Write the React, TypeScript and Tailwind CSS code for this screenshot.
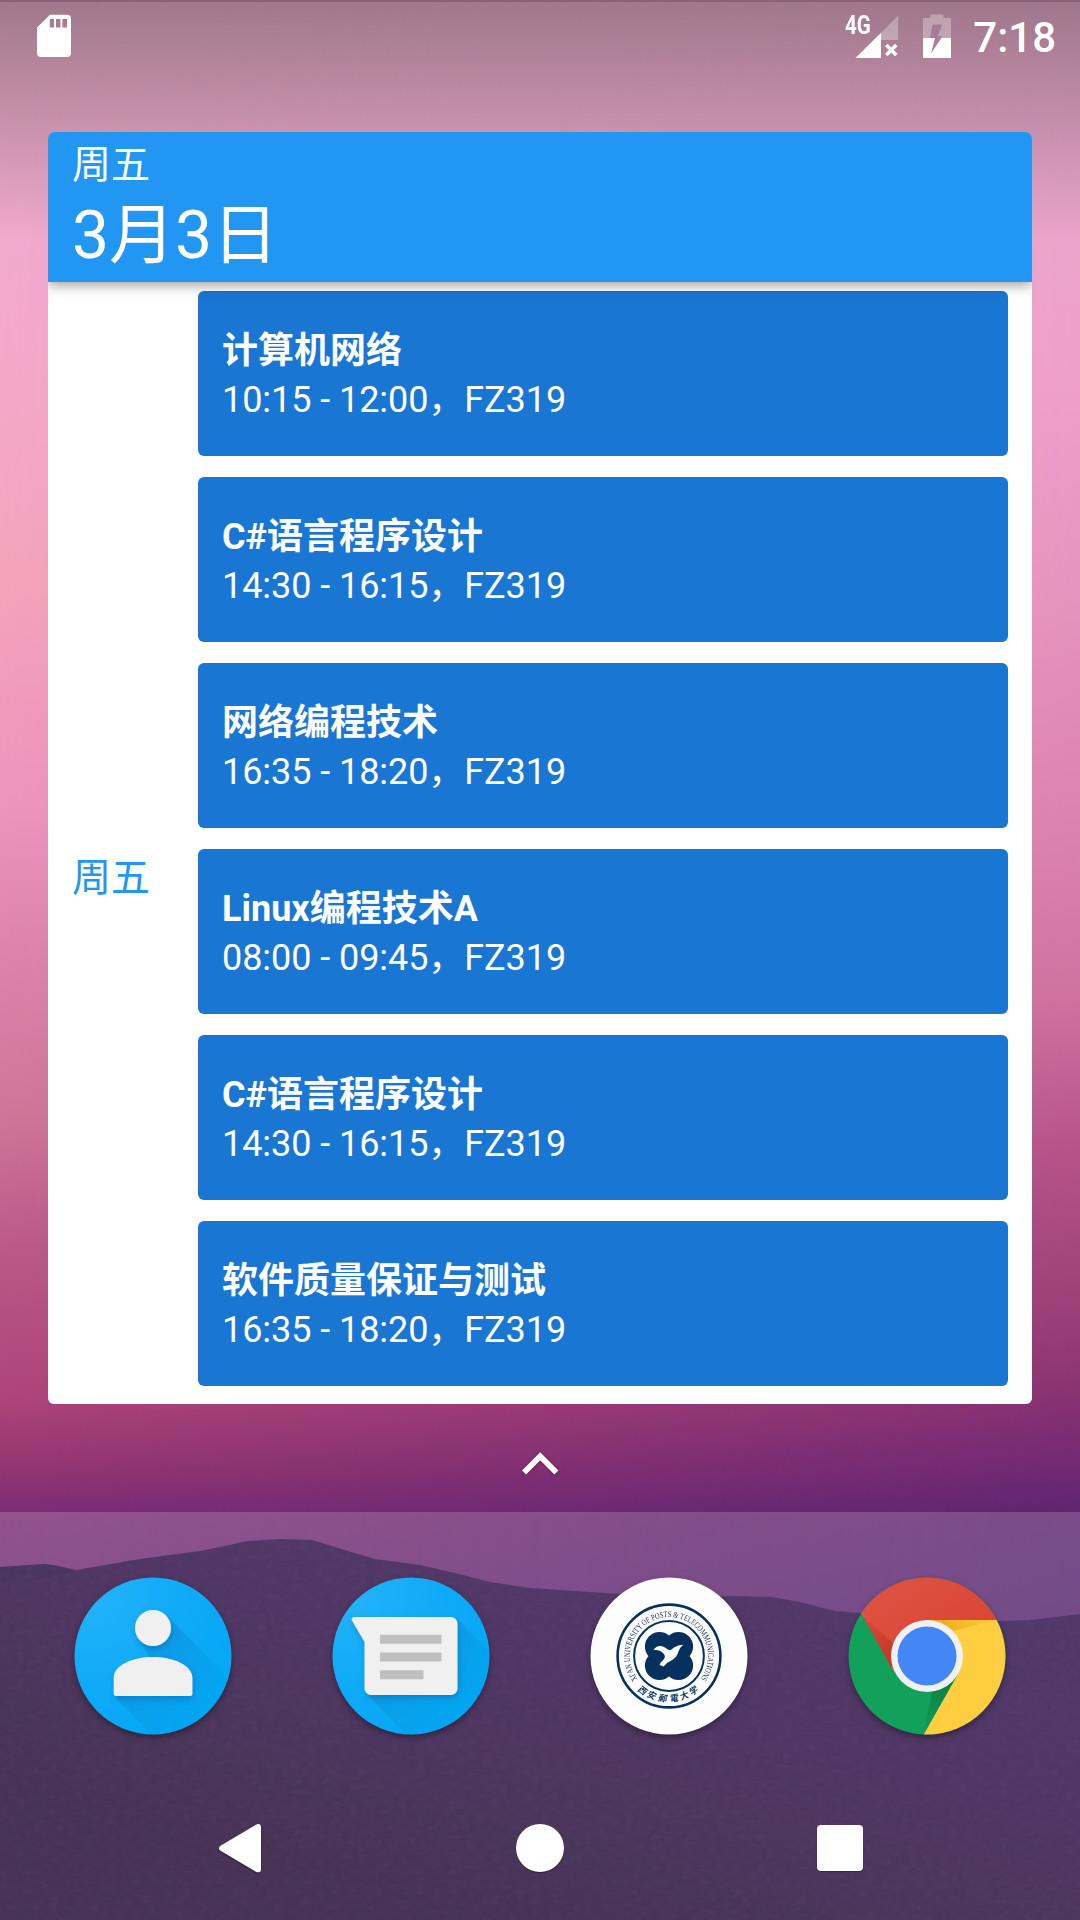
import React from "react";

type Course = { name: string; detail: string };

const courses: Course[] = [
  { name: "计算机网络", detail: "10:15 - 12:00，FZ319" },
  { name: "C#语言程序设计", detail: "14:30 - 16:15，FZ319" },
  { name: "网络编程技术", detail: "16:35 - 18:20，FZ319" },
  { name: "Linux编程技术A", detail: "08:00 - 09:45，FZ319" },
  { name: "C#语言程序设计", detail: "14:30 - 16:15，FZ319" },
  { name: "软件质量保证与测试", detail: "16:35 - 18:20，FZ319" },
];

const ridge =
  "M0 1567 L45 1564 L58 1566 L76 1570 L140 1559 L200 1551 L248 1541 L280 1539 L312 1540 L345 1550 L375 1559 L420 1565 L455 1573 L490 1582 L530 1588 L620 1594 L700 1597 L735 1596 L772 1597 L800 1602 L835 1611 L870 1614 L930 1618 L1000 1621 L1030 1620 L1080 1614 V1920 H0 Z";

function Wallpaper() {
  return (
    <svg className="absolute inset-0" width="1080" height="1920" viewBox="0 0 1080 1920" aria-hidden="true">
      <defs>
        <linearGradient id="skyL" x1="0" y1="0" x2="0" y2="1920" gradientUnits="userSpaceOnUse">
          <stop offset="0" stopColor="#e8aec9" />
          <stop offset="0.15" stopColor="#f2a9cc" />
          <stop offset="0.21" stopColor="#f4a8c7" />
          <stop offset="0.3" stopColor="#f5a3bc" />
          <stop offset="0.42" stopColor="#ec95bd" />
          <stop offset="0.5" stopColor="#dd83ab" />
          <stop offset="0.58" stopColor="#d07699" />
          <stop offset="0.65" stopColor="#bb5a88" />
          <stop offset="0.73" stopColor="#ad447a" />
          <stop offset="0.765" stopColor="#933672" />
          <stop offset="0.79" stopColor="#7b2d74" />
          <stop offset="0.85" stopColor="#682a74" />
        </linearGradient>
        <linearGradient id="skyR" x1="0" y1="0" x2="0" y2="1920" gradientUnits="userSpaceOnUse">
          <stop offset="0" stopColor="#e4abc8" />
          <stop offset="0.12" stopColor="#eaa4ca" />
          <stop offset="0.2" stopColor="#ef9fca" />
          <stop offset="0.32" stopColor="#e592bd" />
          <stop offset="0.45" stopColor="#d97fae" />
          <stop offset="0.52" stopColor="#cf719f" />
          <stop offset="0.6" stopColor="#b55389" />
          <stop offset="0.68" stopColor="#9c4078" />
          <stop offset="0.73" stopColor="#873172" />
          <stop offset="0.765" stopColor="#6f2973" />
          <stop offset="0.79" stopColor="#5d2570" />
          <stop offset="0.85" stopColor="#52256d" />
        </linearGradient>
        <linearGradient id="across">
          <stop offset="0" stopColor="#000" />
          <stop offset="1" stopColor="#fff" />
        </linearGradient>
        <mask id="fade">
          <rect width="1080" height="1920" fill="url(#across)" />
        </mask>
        <linearGradient id="scrim" x1="0" y1="0" x2="0" y2="1">
          <stop offset="0" stopColor="#000" stopOpacity="0.31" />
          <stop offset="1" stopColor="#000" stopOpacity="0" />
        </linearGradient>
        <linearGradient id="hill" x1="600" y1="1540" x2="500" y2="1920" gradientUnits="userSpaceOnUse">
          <stop offset="0" stopColor="#513869" />
          <stop offset="0.4" stopColor="#4f3664" />
          <stop offset="0.75" stopColor="#4a355b" />
          <stop offset="1" stopColor="#473355" />
        </linearGradient>
        <filter id="grain" x="0" y="0" width="1" height="1">
          <feTurbulence type="fractalNoise" baseFrequency="0.12 0.2" numOctaves="3" seed="4" />
          <feColorMatrix values="0 0 0 0 0.6  0 0 0 0 0.35  0 0 0 0 0.6  0.7 0 0 0 -0.27" />
          <feComposite in2="SourceGraphic" operator="in" />
        </filter>
      </defs>
      <rect width="1080" height="1920" fill="url(#skyL)" />
      <rect width="1080" height="1920" fill="url(#skyR)" mask="url(#fade)" />
      <rect width="1080" height="240" fill="url(#scrim)" />
      <rect width="1080" height="2" fill="#60304f" fillOpacity="0.3" />
      <rect y="1512" width="1080" height="408" fill="#fff" fillOpacity="0.18" />
      <path fill="url(#hill)" d={ridge} />
      <path fill="#46335f" fillOpacity="0.5" d="M0 1567 L45 1564 L58 1566 L74 1571 L40 1579 L0 1583Z" />
      <path filter="url(#grain)" opacity="0.13" d={ridge} />
    </svg>
  );
}

function StatusBar() {
  return (
    <header className="flex h-[72px] items-start pl-[37px] pr-[24px] text-white">
      <svg className="mt-[14px]" width="34" height="44" viewBox="0 0 34 44">
        <path
          fill="#fff"
          fillRule="evenodd"
          d="M13 .8H30a4 4 0 0 1 4 4V39a4 4 0 0 1-4 4H4a4 4 0 0 1-4-4V13.5Z M12.8 5v8.6H17V5Z M19 5v8.6h4.4V5Z M25.4 5v8.6H30V5Z"
        />
      </svg>
      <div className="ml-auto flex items-start">
        <div className="relative mt-[14px] h-[44px] w-[54px]">
          <svg width="54" height="44" viewBox="0 0 54 44">
            <path d="M53.2 1.5V26H36V19Z" fill="#fff" fillOpacity="0.3" />
            <path d="M10.5 44 36 18.8V44Z" fill="#fff" />
            <path d="m41.3 31 10 10M51.3 31l-10 10" stroke="#fff" strokeWidth="3.6" />
          </svg>
          <span className="absolute -top-[4px] left-0 origin-left scale-x-[0.79] font-[Roboto] text-[26px] leading-[30px] font-bold">4G</span>
        </div>
        <svg className="ml-[24px] mt-[14px]" width="28" height="44" viewBox="0 0 28 44">
          <path
            fill="#fff"
            fillOpacity="0.3"
            fillRule="evenodd"
            d="M7.2.5H20.5V4H28V24H17.5L19.3 22H14.8L19.2 10.5H9.6L7 24H0V4H7.2Z"
          />
          <path fill="#fff" d="M0 24H6.9L12 24 8 39.6 18.4 24H28V44H0Z" />
        </svg>
        <span className="ml-[22px] mt-[13px] font-[Roboto] text-[42px] leading-[50px] font-medium">7:18</span>
      </div>
    </header>
  );
}

function CourseCard({ course }: { course: Course }) {
  return (
    <li className="flex h-[165px] flex-col rounded-[6px] bg-[#1976d3] px-6 pt-9 text-[36px] text-white">
      <span className="leading-[49px] font-bold">{course.name}</span>
      <span className="leading-[48px] font-normal tracking-[-0.06px]">{course.detail}</span>
    </li>
  );
}

function Widget() {
  return (
    <section className="mx-12 mt-[60px] flex h-[1272px] flex-col overflow-hidden rounded-[6px] bg-white">
      <div className="relative z-10 flex h-[150px] shrink-0 flex-col bg-[#2196f3] px-6 text-white shadow-[0_3px_12px_rgba(0,0,0,0.4)]">
        <span className="mt-[6px] text-[39px] leading-[54px]">周五</span>
        <span className="mt-[2px] text-[66px] leading-[84px]">3月3日</span>
      </div>
      <div className="flex flex-1 items-center px-6">
        <div className="w-[126px] pt-[70px] text-[39px] leading-[54px] text-[#2196f3]">周五</div>
        <ul className="flex flex-1 flex-col gap-[21px] pb-[9px]">
          {courses.map((course, i) => (
            <CourseCard key={i} course={course} />
          ))}
        </ul>
      </div>
    </section>
  );
}

const iconClass = "h-[158px] w-[158px] overflow-visible drop-shadow-[0_3px_3px_rgba(0,0,0,0.35)]";

function BlueDisc({ id }: { id: string }) {
  return (
    <>
      <defs>
        <radialGradient id={id + "g"} cx="0.1" cy="0.1" r="1">
          <stop offset="0" stopColor="#24b3f8" />
          <stop offset="0.6" stopColor="#0faaf8" />
          <stop offset="1" stopColor="#05a8f6" />
        </radialGradient>
        <linearGradient id={id + "s"} x1="0.3" y1="0.3" x2="0.8" y2="0.8">
          <stop offset="0" stopColor="#0277bd" stopOpacity="0.3" />
          <stop offset="1" stopColor="#0288d1" stopOpacity="0.06" />
        </linearGradient>
        <clipPath id={id + "c"}>
          <circle cx="79" cy="79" r="78.5" />
        </clipPath>
        <filter id={id + "d"} x="-30%" y="-30%" width="160%" height="160%">
          <feDropShadow dx="1" dy="3" stdDeviation="3" floodColor="#01579b" floodOpacity="0.4" />
        </filter>
      </defs>
      <circle cx="79" cy="79" r="78.5" fill={"url(#" + id + "g)"} />
    </>
  );
}

function ContactsIcon() {
  return (
    <svg className={iconClass} viewBox="0 0 158 158">
      <BlueDisc id="contact" />
      <g clipPath="url(#contactc)">
        <path d="M92 38 160 106V170H90L42 121 78 85 66 64Z" fill="url(#contacts)" />
      </g>
      <g filter="url(#contactd)" fill="#f0f0f0">
        <circle cx="79" cy="51" r="18" />
        <path d="M39.7 101C39.7 88 59 80 79 80S118.4 88 118.4 101V116.5a2.5 2.5 0 0 1-2.5 2.5H42.2a2.5 2.5 0 0 1-2.5-2.5Z" />
      </g>
    </svg>
  );
}

function MessagesIcon() {
  return (
    <svg className={iconClass} viewBox="0 0 158 158">
      <BlueDisc id="msg" />
      <g clipPath="url(#msgc)">
        <path d="M124 41 172 89V170H85L34 116Z" fill="url(#msgs)" />
      </g>
      <path
        filter="url(#msgd)"
        fill="#f0f0f0"
        d="M22.5 40H119a6.5 6.5 0 0 1 6.5 6.5V111.5a6.5 6.5 0 0 1-6.5 6.5H39a6.5 6.5 0 0 1-6.5-6.5V65L20.3 44C19 42 20 40 22.5 40Z"
      />
      <path fill="#bfbfbf" d="M48 57.7h61.5v9H48ZM48 75.5h61.5v9H48ZM48 93.3h43.5v9H48Z" />
    </svg>
  );
}

const sealCharacters = [
  { char: "西", x: 52.7, y: 113.7, turn: 37 },
  { char: "安", x: 62, y: 118.3, turn: 23 },
  { char: "郵", x: 73, y: 121.2, turn: 8 },
  { char: "電", x: 84.4, y: 121, turn: -7 },
  { char: "大", x: 94.4, y: 118.5, turn: -21 },
  { char: "学", x: 103.8, y: 113.5, turn: -36 },
];

function UniversityIcon() {
  return (
    <svg className={iconClass} viewBox="0 0 158 158">
      <circle cx="79" cy="79" r="78.5" fill="#fdfdfd" />
      <g fill="none" stroke="#06315f">
        <circle cx="79" cy="79" r="51.4" strokeWidth="2.6" />
        <circle cx="79" cy="79" r="34.9" strokeWidth="2" />
      </g>
      <path id="sealTop" d="M48.2 103A39 39 0 1 1 109.8 103" fill="none" />
      <text fill="#06315f" fontFamily="Liberation Serif, serif" fontSize="8.6">
        <textPath href="#sealTop" startOffset="1" textLength="171" lengthAdjust="spacingAndGlyphs">
          XI'AN UNIVERSITY OF POSTS &amp; TELECOMMUNICATIONS
        </textPath>
      </text>
      <g fill="#06315f" fontFamily="Noto Sans CJK SC, sans-serif" fontSize="8.8" fontWeight="700" textAnchor="middle">
        {sealCharacters.map((s) => (
          <text key={s.char} y="3.2" transform={`translate(${s.x} ${s.y}) rotate(${s.turn}) skewX(-8)`}>
            {s.char}
          </text>
        ))}
      </g>
      <g fill="#06315f">
        <circle cx="69.5" cy="69.5" r="14.6" />
        <circle cx="88.5" cy="69.5" r="14.6" />
        <circle cx="69.5" cy="88.5" r="14.6" />
        <circle cx="88.5" cy="88.5" r="14.6" />
      </g>
      <path
        fill="#fff"
        d="M63.5 73C66 69 70 68 74 70C77 72 79 74 81.5 72.5C85 69.5 88 68 93.5 67.7C90 70 89 73 87.5 77C85 82.5 80 84 77 86L73.5 89.5 69.5 88 71 85C75 82 76 79.5 73.5 76.5C71 73.5 67 72.5 63.5 73Z"
      />
    </svg>
  );
}

function ChromeIcon() {
  return (
    <svg className={iconClass} viewBox="0 0 158 158">
      <defs>
        <clipPath id="chromeClip">
          <circle cx="79" cy="79" r="78.5" />
        </clipPath>
        <linearGradient id="redShade" x1="0" y1="0" x2="0.7" y2="0.6">
          <stop offset="0" stopColor="#e05545" />
          <stop offset="1" stopColor="#da4736" />
        </linearGradient>
        <linearGradient id="redFold" x1="15" y1="36" x2="45" y2="90" gradientUnits="userSpaceOnUse">
          <stop offset="0" stopColor="#a52714" stopOpacity="0.05" />
          <stop offset="1" stopColor="#a52714" stopOpacity="0.55" />
        </linearGradient>
        <linearGradient id="yellowFold" x1="85" y1="0" x2="148" y2="0" gradientUnits="userSpaceOnUse">
          <stop offset="0" stopColor="#d68a00" stopOpacity="0.55" />
          <stop offset="1" stopColor="#ea9a00" stopOpacity="0.05" />
        </linearGradient>
        <linearGradient id="greenFold" x1="100" y1="105" x2="78" y2="155" gradientUnits="userSpaceOnUse">
          <stop offset="0" stopColor="#055524" stopOpacity="0.45" />
          <stop offset="1" stopColor="#055524" stopOpacity="0.05" />
        </linearGradient>
      </defs>
      <g clipPath="url(#chromeClip)">
        <rect width="158" height="158" fill="#12a05b" />
        <path d="M13 36 0 0H158V43H79L45 94Z" fill="url(#redShade)" />
        <path d="M79 43H158V158H75.5L110 97Z" fill="#ffcd40" />
        <path d="M13 37 50 71 43 90Z" fill="url(#redFold)" />
        <path d="M79 43H148L102 55Z" fill="url(#yellowFold)" />
        <path d="M110 97 75.5 157 85 110Z" fill="url(#greenFold)" />
      </g>
      <circle cx="79" cy="79" r="36" fill="#f1f1f1" />
      <circle cx="79" cy="79" r="29.5" fill="#4486f4" />
    </svg>
  );
}

function Dock() {
  return (
    <nav className="grid h-[264px] grid-cols-4 justify-items-center px-6 pt-[65px]">
      <ContactsIcon />
      <MessagesIcon />
      <UniversityIcon />
      <ChromeIcon />
    </nav>
  );
}

function NavigationBar() {
  return (
    <footer className="flex h-[144px] items-center justify-center gap-[252px]">
      <svg className="overflow-visible drop-shadow-[0_1px_1px_rgba(0,0,0,0.4)]" width="48" height="48" viewBox="0 0 48 48">
        <path
          fill="#fff"
          d="M5 21.5 39.5 1C42.5-.8 45 .2 45 3V45.5C45 48.2 42.5 49.2 39.5 47.5L5 27C2.2 25.3 2.2 23.2 5 21.5Z"
        />
      </svg>
      <span className="h-12 w-12 rounded-full bg-white shadow-[0_1px_1px_rgba(0,0,0,0.4)]" />
      <span className="flex h-12 w-12 items-center justify-center">
        <span className="h-[46px] w-[46px] rounded-[4px] bg-white shadow-[0_1px_1px_rgba(0,0,0,0.3)]" />
      </span>
    </footer>
  );
}

export default function App() {
  return (
    <div className="relative h-[1920px] w-[1080px] overflow-hidden font-[Roboto,'Noto_Sans_CJK_SC',sans-serif]">
      <Wallpaper />
      <main className="relative flex h-full flex-col">
        <StatusBar />
        <Widget />
        <div className="flex h-[108px] justify-center pt-[47px]">
          <svg className="drop-shadow-[0_0_1px_rgba(0,0,0,0.4)]" width="38" height="26" viewBox="0 0 38 26">
            <path d="M3 21.5 19.2 5.3 35.4 21.5" fill="none" stroke="#fff" strokeWidth="5.8" />
          </svg>
        </div>
        <Dock />
        <NavigationBar />
      </main>
    </div>
  );
}
